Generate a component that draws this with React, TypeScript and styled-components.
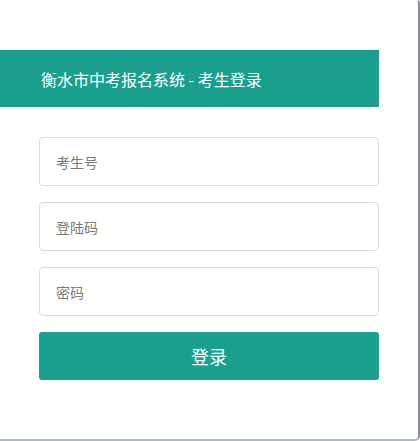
import styled, { createGlobalStyle } from "styled-components";

const GlobalStyle = createGlobalStyle`
  html, body {
    margin: 0;
    padding: 0;
    background: #ffffff;
  }
  body {
    font-family: "Noto Sans CJK SC", "Liberation Sans", sans-serif;
  }
`;

const TEAL = "#1a9f8f";

const fields = ["考生号", "登陆码", "密码"];

export default function App() {
  return (
    <>
      <GlobalStyle />
      <Card>
        <Header>衡水市中考报名系统 - 考生登录</Header>
        <Form onSubmit={(e) => e.preventDefault()}>
          {fields.map((label) => (
            <Input
              key={label}
              type={label === "密码" ? "password" : "text"}
              placeholder={label}
            />
          ))}
          <SubmitButton type="submit">登录</SubmitButton>
        </Form>
      </Card>
    </>
  );
}

const Card = styled.div`
  box-sizing: border-box;
  width: 420px;
  height: 441px;
  background: #ffffff;
  border-right: 2px solid #8e9096;
  border-bottom: 2px solid #b2b8c0;
  border-top-right-radius: 3px;
  border-bottom-right-radius: 5px;
  padding-top: 50px;
  overflow: hidden;
`;

const Header = styled.div`
  box-sizing: border-box;
  width: 379px;
  height: 57px;
  padding-left: 41px;
  display: flex;
  align-items: center;
  background: ${TEAL};
  color: #ffffff;
  font-size: 16px;
`;

const Form = styled.form`
  width: 340px;
  margin: 30px 0 0 39px;
  display: flex;
  flex-direction: column;
  gap: 16px;
`;

const Input = styled.input`
  box-sizing: border-box;
  width: 100%;
  height: 49px;
  padding: 0 16px;
  border: 1px solid #dcdcdc;
  border-radius: 4px;
  font-family: inherit;
  font-size: 14px;
  color: #333;
  outline: none;

  &::placeholder {
    color: #7a7a7a;
  }
`;

const SubmitButton = styled.button`
  height: 48px;
  border: none;
  border-radius: 3px;
  background: ${TEAL};
  color: #ffffff;
  font-family: inherit;
  font-size: 18px;
  cursor: pointer;
`;
